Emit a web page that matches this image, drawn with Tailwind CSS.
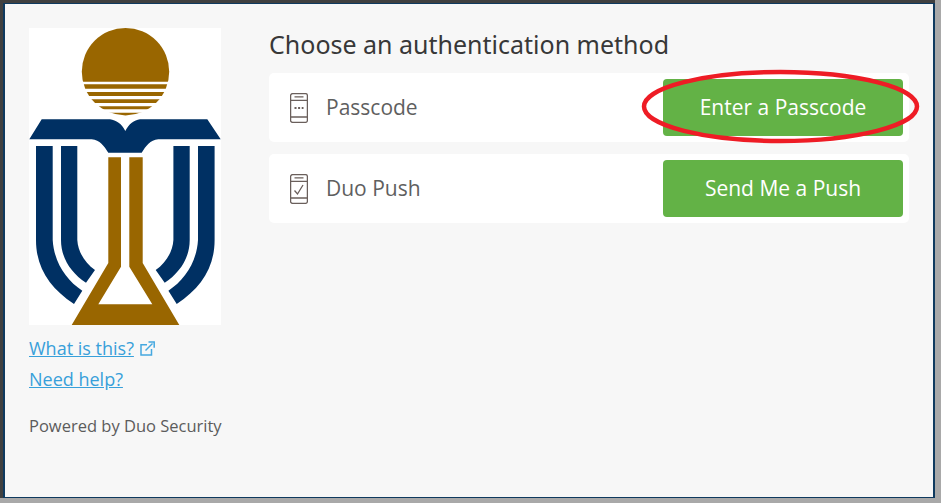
<!DOCTYPE html>
<html lang="en">
<head>
    <meta charset="UTF-8">
    <title>Choose an authentication method</title>
    <script src="https://cdn.jsdelivr.net/npm/@tailwindcss/browser@4"></script>
</head>
<body class="bg-[#a9a9a9]">
    <div class="relative w-[941px] h-[503px] overflow-hidden font-['Open_Sans',sans-serif]">
        <!-- window frame -->
        <div class="w-[935px] h-[498px] border-t-[3px] border-l-[3px] border-[#404040]">
            <div class="flex w-full h-full bg-[#f7f7f7] border-t border-l-2 border-r-2 border-b border-[#0f3a5f]">
                <!-- left column -->
                <div class="w-[264px] shrink-0 pl-[24px] pt-[24px]">
                    <svg class="block w-[192px] h-[297px] bg-white" viewBox="29 28 192 297">
                        <defs>
                            <clipPath id="sun">
                                <rect x="80" y="26" width="92" height="55.7"></rect>
                                <rect x="80" y="84.3" width="92" height="4.4"></rect>
                                <rect x="80" y="92" width="92" height="4"></rect>
                                <rect x="80" y="99.3" width="92" height="3.7"></rect>
                                <rect x="80" y="106.3" width="92" height="3"></rect>
                                <rect x="80" y="112.7" width="92" height="3.3"></rect>
                            </clipPath>
                        </defs>
                        <circle cx="125.5" cy="71.7" r="43.7" fill="#996600" clip-path="url(#sun)"></circle>
                        <path fill="#003063" d="M41.7 119.3H110C116 120 122 124 125.3 131C129 124 134 120 140 119.3H207.3L220.7 139.3H158.3C150 140 146 146 141.7 152.7H108.3C104 146 100 140 91.7 139.3H29.3Z"></path>
                        <path fill="#003063" d="M36 146H52.7V240C54 262 66 280 82.3 290.7L74 304C50 288 36 268 36 240Z"></path>
                        <path fill="#003063" d="M61 146H77.3V240C78 252 85 263 95 270L86 282.7C71 273 61 258 61 240Z"></path>
                        <path fill="#003063" d="M214.6 146H198V240C196.7 262 184.7 280 168.4 290.7L176.7 304C200.7 288 214.6 268 214.6 240Z"></path>
                        <path fill="#003063" d="M189.7 146H173.4V240C172.7 252 165.7 263 155.7 270L164.7 282.7C179.7 273 189.7 258 189.7 240Z"></path>
                        <path fill="#996600" d="M108.3 157.3H121V266.7L98.3 304.3H152.3L129.3 266.7V157.3H142.7V263L179.3 325H71.7L108.3 263Z"></path>
                    </svg>
                    <div class="mt-[10px] flex items-center h-[26px]">
                        <a href="#" class="text-[18px] leading-[26px] text-[#38a0da] underline">What is this?</a>
                        <svg class="ml-[6px] w-[15px] h-[15px]" viewBox="0 0 15 15" fill="none" stroke="#45a8e0" stroke-width="1.5">
                            <path d="M7 3.7H1V14H11.5V8"></path>
                            <path d="M5.5 9.5L12.5 2.5"></path>
                            <path d="M8.5 1H14.2V6.7"></path>
                        </svg>
                    </div>
                    <a href="#" class="block mt-[5px] text-[18px] leading-[26px] text-[#38a0da] underline">Need help?</a>
                    <p class="mt-[22px] text-[16.5px] leading-[24px] text-[#5c5c5c] whitespace-nowrap">Powered by Duo Security</p>
                </div>
                <!-- right column -->
                <div class="w-[640px] shrink-0">
                    <h1 class="mt-[22px] text-[25px] leading-[36px] text-[#383838] font-['Noto_Sans',sans-serif] whitespace-nowrap">Choose an authentication method</h1>
                    <div class="mt-[11px] flex items-center justify-between h-[69px] pl-[21px] pr-[6px] bg-white rounded-[5px]">
                        <div class="flex items-center gap-[18px]">
                            <svg class="w-[18px] h-[30px]" viewBox="0 0 18 30" fill="none" stroke="#6a5f5b" stroke-width="1.3">
                                <rect x="0.6" y="0.6" width="16.8" height="28.8" rx="2"></rect>
                                <path d="M0.6 7.3H17.4M0.6 24H17.4M4.5 3.8H13.5"></path>
                                <path d="M4.5 15H13.5" stroke-width="1.8" stroke-dasharray="2 1.6"></path>
                            </svg>
                            <span class="text-[21px] text-[#5f5f5f]">Passcode</span>
                        </div>
                        <button class="w-[240px] h-[57px] bg-[#63b246] rounded-[4px] text-white text-[21px]">Enter a Passcode</button>
                    </div>
                    <div class="mt-[12px] flex items-center justify-between h-[69px] pl-[21px] pr-[6px] bg-white rounded-[5px]">
                        <div class="flex items-center gap-[18px]">
                            <svg class="w-[18px] h-[30px]" viewBox="0 0 18 30" fill="none" stroke="#6a5f5b" stroke-width="1.3">
                                <rect x="0.6" y="0.6" width="16.8" height="28.8" rx="2"></rect>
                                <path d="M0.6 7.3H17.4M0.6 24H17.4M4.5 3.8H13.5"></path>
                                <path d="M4.5 16.5L7.5 20L13 11"></path>
                            </svg>
                            <span class="text-[21px] text-[#5f5f5f]">Duo Push</span>
                        </div>
                        <button class="w-[240px] h-[57px] bg-[#63b246] rounded-[4px] text-white text-[21px]">Send Me a Push</button>
                    </div>
                </div>
            </div>
        </div>
        <!-- red annotation over the button -->
        <svg class="absolute left-[636px] top-[64px] w-[290px] h-[86px]" viewBox="636 64 290 86" fill="none">
            <ellipse cx="780.5" cy="106.5" rx="136.5" ry="34.5" stroke="#ee1c25" stroke-width="4.5"></ellipse>
        </svg>
    </div>
</body>
</html>
